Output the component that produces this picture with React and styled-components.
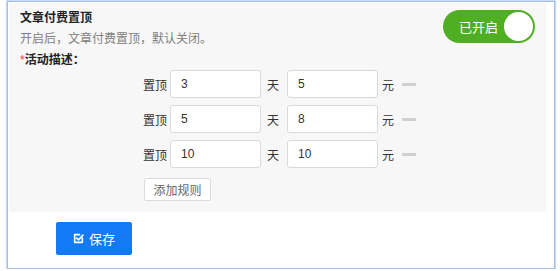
import React, { useState } from 'react';
import styled, { createGlobalStyle } from 'styled-components';

const GlobalStyle = createGlobalStyle`
  html, body {
    margin: 0;
    padding: 0;
    background: #fff;
  }
  body {
    font-family: "Liberation Sans", "Noto Sans CJK SC", sans-serif;
    font-size: 12px;
    color: #333;
  }
`

const Frame = styled.div`
  box-sizing: border-box;
  width: 548px;
  height: 268px;
  margin: 1px 0 0 7px;
  border: 1px solid #a3bfe6;
  box-shadow: 0 0 1px 1px #cddcf3;
  background: #fff;
  padding: 1px 8px 0 1px;
  display: flex;
  flex-direction: column;
`

const Panel = styled.div`
  background: #f7f7f7;
  padding: 5px 11px 11px 11px;
  display: flex;
  flex-direction: column;
`

const Header = styled.div`
  display: flex;
  justify-content: space-between;
  align-items: flex-start;
`

const Title = styled.div`
  font-size: 12px;
  line-height: 20px;
  font-weight: bold;
  color: #222;
`

const Desc = styled.div`
  font-size: 12px;
  line-height: 22px;
  color: #808080;
`

const FieldLabel = styled.div`
  font-size: 12px;
  line-height: 20px;
  font-weight: bold;
  color: #222;
  &::before {
    content: '*';
    color: #e33;
    font-weight: normal;
  }
`

const Toggle = styled.button`
  margin-top: 2px;
  width: 92px;
  height: 33px;
  border: none;
  border-radius: 17px;
  background: #50ae22;
  display: flex;
  align-items: center;
  justify-content: space-between;
  padding: 0 2px 0 16px;
  box-sizing: border-box;
  cursor: pointer;
  font-family: inherit;
`

const ToggleText = styled.span`
  color: #fff;
  font-size: 13px;
`

const Knob = styled.span`
  width: 29px;
  height: 29px;
  border-radius: 50%;
  background: #fff;
`

const Rules = styled.div`
  display: flex;
  flex-direction: column;
  gap: 7px;
  margin: 0 0 0 123px;
`

const Row = styled.div`
  display: flex;
  align-items: center;
  height: 28px;
`

const Unit = styled.span`
  font-size: 12px;
  color: #333;
  margin: ${p => p.$margin};
`

const Input = styled.input`
  box-sizing: border-box;
  width: 91px;
  height: 28px;
  border: 1px solid #dadada;
  border-radius: 3px;
  background: #fff;
  padding: 0 10px;
  font-size: 12px;
  color: #333;
  font-family: inherit;
  outline: none;
`

const Remove = styled.span`
  width: 14px;
  height: 3px;
  background: #cfcfcf;
  margin-left: 8px;
  border-radius: 1px;
`

const AddButton = styled.button`
  align-self: flex-start;
  margin: 10px 0 0 124px;
  width: 67px;
  height: 23px;
  background: #fff;
  border: 1px solid #dcdcdc;
  border-radius: 2px;
  font-size: 12px;
  color: #666;
  font-family: inherit;
  padding: 0;
`

const Footer = styled.div`
  padding: 10px 0 0 47px;
`

const SaveButton = styled.button`
  width: 76px;
  height: 33px;
  border: none;
  border-radius: 2px;
  background: #1379f5;
  color: #fff;
  font-size: 13px;
  font-family: inherit;
  display: flex;
  align-items: center;
  justify-content: center;
  gap: 5px;
  padding: 0;
`

const CheckIcon = () => (
  <svg width="11" height="11" viewBox="0 0 10 10" fill="none" stroke="#fff" strokeWidth="1.5" strokeLinecap="round" strokeLinejoin="round">
    <path d="M8.5 4.5V8.5H1.5V1.5H6" />
    <path d="M3.3 4.6L5 6.2L9 2" />
  </svg>
)

const rules = [
  { days: '3', price: '5' },
  { days: '5', price: '8' },
  { days: '10', price: '10' },
]

function App() {
  const [items] = useState(rules);

  return (
    <>
      <GlobalStyle />
      <Frame>
        <Panel>
          <Header>
            <div>
              <Title>文章付费置顶</Title>
              <Desc>开启后，文章付费置顶，默认关闭。</Desc>
              <FieldLabel>活动描述：</FieldLabel>
            </div>
            <Toggle>
              <ToggleText>已开启</ToggleText>
              <Knob />
            </Toggle>
          </Header>
          <Rules>
            {items.map((item, i) => (
              <Row key={i}>
                <Unit $margin="0 3px 0 0">置顶</Unit>
                <Input defaultValue={item.days} />
                <Unit $margin="0 8px 0 6px">天</Unit>
                <Input defaultValue={item.price} />
                <Unit $margin="0 0 0 4px">元</Unit>
                <Remove />
              </Row>
            ))}
          </Rules>
          <AddButton>添加规则</AddButton>
        </Panel>
        <Footer>
          <SaveButton>
            <CheckIcon />
            保存
          </SaveButton>
        </Footer>
      </Frame>
    </>
  )
}

export default App;
